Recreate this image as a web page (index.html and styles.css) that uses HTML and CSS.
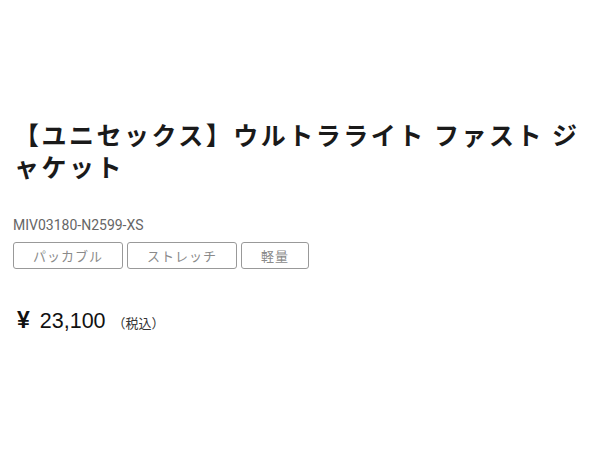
FILE: index.html
```html
<!DOCTYPE html>
<html lang="ja">
<head>
<meta charset="utf-8">
<link rel="stylesheet" href="styles.css">
</head>
<body>
<main class="product">
  <h1 class="title">【ユニセックス】ウルトラライト ファスト ジャケット</h1>
  <p class="code">MIV03180-N2599-XS</p>
  <ul class="tags">
    <li class="tag">パッカブル</li>
    <li class="tag">ストレッチ</li>
    <li class="tag">軽量</li>
  </ul>
  <p class="price"><span class="yen">¥</span><span class="amount">23,100</span><span class="tax">（税込）</span></p>
</main>
</body>
</html>
```
FILE: styles.css
```css
html, body {
  margin: 0;
  padding: 0;
  background: #fff;
}
.product {
  padding: 118px 13px 0 14px;
  font-family: "Noto Sans CJK JP", sans-serif;
}
.title {
  margin: 0;
  font-size: 25px;
  line-height: 32px;
  font-weight: 700;
  letter-spacing: 2.5px;
  color: #1a1a1a;
}
.code {
  margin: 34px 0 0 -1px;
  font-family: Roboto, "Noto Sans CJK JP", sans-serif;
  font-size: 14px;
  line-height: 18px;
  color: #666;
}
.tags {
  list-style: none;
  margin: 8px 0 0 -1px;
  padding: 0;
  display: flex;
  gap: 4px;
}
.tag {
  border: 1px solid #999;
  border-radius: 3px;
  padding: 0 19px;
  height: 25px;
  line-height: 25px;
  font-size: 13px;
  letter-spacing: 1px;
  color: #8a8a8a;
}
.price {
  margin: 38px 0 0 3px;
  display: flex;
  align-items: baseline;
  font-family: "Liberation Sans", Arial, sans-serif;
  color: #111;
}
.yen {
  font-size: 23px;
  font-weight: 700;
  margin-right: 10px;
}
.amount {
  font-size: 21.5px;
}
.tax {
  margin-left: 7px;
  font-family: "Noto Sans CJK JP", sans-serif;
  font-size: 13px;
  color: #333;
}
```
